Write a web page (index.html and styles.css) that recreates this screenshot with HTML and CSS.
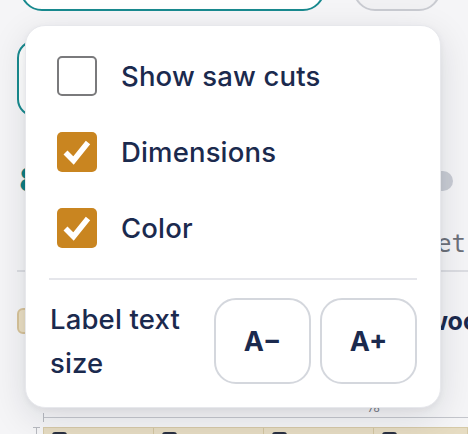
FILE: index.html
```html
<!DOCTYPE html>
<html lang="en">
<head>
<meta charset="utf-8">
<title>Display options</title>
<link rel="stylesheet" href="styles.css">
</head>
<body>
<div class="app">
  <div class="top-row">
    <div class="search"></div>
    <div class="pill-btn"></div>
  </div>
  <div class="field"></div>
  <div class="stat-row">
    <span class="stat">8</span>
    <span class="knob"></span>
  </div>
  <div class="mono-row"><span class="mono">Sheet</span></div>
  <div class="rule"></div>
  <div class="material-row">
    <span class="swatch"></span>
    <span class="material">Plywood</span>
  </div>
  <div class="ruler-row">
    <span class="ruler-label">78</span>
    <div class="ruler"></div>
  </div>
  <div class="sheet-row">
    <span class="vtick"></span>
    <div class="sheet">
      <div class="cell"><span class="chip"></span></div>
      <div class="cell"><span class="chip"></span></div>
      <div class="cell"><span class="chip"></span></div>
      <div class="cell"><span class="chip"></span></div>
    </div>
  </div>
</div>

<div class="popover">
  <label class="opt">
    <span class="box"></span>
    <span class="opt-text">Show saw cuts</span>
  </label>
  <label class="opt">
    <span class="box checked">
      <svg viewBox="0 0 40 40" width="40" height="40"><path d="M8.5 20.5 L16.5 28.5 L31 10.5" fill="none" stroke="#fff" stroke-width="5.6" stroke-linejoin="miter"/></svg>
    </span>
    <span class="opt-text">Dimensions</span>
  </label>
  <label class="opt">
    <span class="box checked">
      <svg viewBox="0 0 40 40" width="40" height="40"><path d="M8.5 20.5 L16.5 28.5 L31 10.5" fill="none" stroke="#fff" stroke-width="5.6" stroke-linejoin="miter"/></svg>
    </span>
    <span class="opt-text">Color</span>
  </label>
  <div class="divider"></div>
  <div class="size-row">
    <span class="size-label">Label text size</span>
    <div class="size-btns">
      <button class="size-btn">A&minus;</button>
      <button class="size-btn">A+</button>
    </div>
  </div>
</div>
</body>
</html>
```
FILE: styles.css
```css
* { box-sizing: border-box; }
html, body { margin: 0; padding: 0; }
body {
  width: 468px;
  height: 434px;
  overflow: hidden;
  background: #f5f5f7;
  font-family: Inter, "Noto Sans", sans-serif;
  color: #1b2a4e;
  position: relative;
}

/* background app */
.app { padding-left: 17px; }
.top-row {
  display: flex;
  align-items: flex-end;
  height: 11px;
  padding-left: 3px;
}
.search {
  width: 305px;
  height: 50px;
  flex: none;
  border: 2px solid #188a8f;
  border-radius: 22px;
  background: #fff;
}
.pill-btn {
  width: 88px;
  height: 50px;
  flex: none;
  margin-left: 28px;
  border: 2px solid #c9cbd1;
  border-radius: 22px;
  background: #f1f1f3;
}
.field {
  margin-top: 29px;
  height: 77px;
  width: 400px;
  border: 2px solid #188a8f;
  border-radius: 18px;
  background: #fff;
}
.stat-row {
  margin-top: 46px;
  height: 34px;
  display: flex;
  align-items: center;
  justify-content: space-between;
  padding-left: 2px;
  padding-right: 15px;
}
.stat {
  font-size: 34px;
  font-weight: 700;
  color: #0f7f84;
  line-height: 34px;
}
.knob {
  width: 30px;
  height: 20px;
  border-radius: 10px;
  background: #c9ccd4;
  margin-top: 2px;
}
.mono-row {
  margin-top: 32px;
  height: 30px;
  display: flex;
  justify-content: flex-end;
  padding-right: 2px;
}
.mono {
  font-family: "DejaVu Sans Mono", "Liberation Mono", monospace;
  font-size: 24px;
  line-height: 30px;
  color: #6d717a;
}
.rule {
  margin-top: 11px;
  height: 2px;
  background: #dcdde2;
}
.material-row {
  margin-top: 36px;
  height: 26px;
  display: flex;
  align-items: center;
  justify-content: space-between;
  overflow: hidden;
}
.swatch {
  width: 24px;
  height: 26px;
  flex: none;
  border-radius: 6px;
  border: 2px solid #d8c39a;
  background: #ebdfc3;
}
.material {
  font-size: 25px;
  font-weight: 700;
  color: #1b2a4e;
  margin-right: -26px;
  line-height: 26px;
  white-space: nowrap;
}
.ruler-row {
  margin-top: 69px;
  padding-left: 26px;
}
.ruler-label {
  display: block;
  margin-left: 325px;
  font-size: 10px;
  line-height: 10px;
  color: #6d717a;
}
.ruler {
  margin-top: 4px;
  height: 1px;
  background: #c4c6cc;
  position: relative;
}
.ruler::before {
  content: "";
  position: absolute;
  left: 0;
  top: -4px;
  width: 1px;
  height: 9px;
  background: #b8bac0;
}
.sheet-row {
  display: flex;
  align-items: flex-start;
  padding-left: 16px;
}
.vtick {
  width: 7px;
  height: 10px;
  flex: none;
  border-top: 1px solid #b8bac0;
  margin-top: 9px;
  position: relative;
}
.vtick::after {
  content: "";
  position: absolute;
  left: 3px;
  top: 0;
  width: 1px;
  height: 10px;
  background: #b8bac0;
}
.sheet {
  margin-left: 3px;
  margin-top: 9px;
  display: flex;
  flex: 1;
  min-width: 0;
  overflow: hidden;
  height: 20px;
  background: #e6dcc2;
  border: 1px solid #d6caa8;
}
.cell {
  width: 110px;
  flex: none;
  border-right: 1px solid #d2c5a0;
  padding: 4px 0 0 8px;
}
.chip {
  display: block;
  width: 15px;
  height: 8px;
  border-radius: 3px;
  background: #2a3142;
}

/* popover */
.popover {
  position: absolute;
  left: 25px;
  top: 25px;
  width: 416px;
  height: 383px;
  background: #fff;
  border: 1px solid #e7e8ec;
  border-radius: 20px;
  box-shadow: 0 10px 36px rgba(20, 25, 45, 0.12), 0 2px 6px rgba(20, 25, 45, 0.05);
  padding: 12px 23px 24px 23px;
  display: flex;
  flex-direction: column;
}
.opt {
  height: 76px;
  display: flex;
  align-items: center;
  gap: 24px;
  padding-left: 8px;
  flex: none;
}
.box {
  width: 40px;
  height: 40px;
  flex: none;
  border: 2px solid #7a7a7c;
  border-radius: 5px;
  background: #fff;
  display: block;
}
.box.checked {
  border: none;
  background: #c98520;
}
.box svg { display: block; }
.opt-text {
  font-size: 27.5px;
  font-weight: 500;
  letter-spacing: 0.15px;
}
.divider {
  margin-top: 12px;
  height: 2px;
  background: #e5e6eb;
  flex: none;
}
.size-row {
  margin-top: 17px;
  display: flex;
  align-items: center;
  gap: 12px;
}
.size-label {
  flex: 1;
  font-size: 27.5px;
  font-weight: 500;
  letter-spacing: 0.15px;
  line-height: 44px;
  padding-left: 1px;
}
.size-btns {
  display: flex;
  gap: 9px;
}
.size-btn {
  width: 97px;
  height: 86px;
  border: 2px solid #d4d7dd;
  border-radius: 22px;
  background: #fff;
  font-family: Inter, "Noto Sans", sans-serif;
  font-size: 27px;
  font-weight: 700;
  color: #1b2a4e;
  padding: 0;
}
```
